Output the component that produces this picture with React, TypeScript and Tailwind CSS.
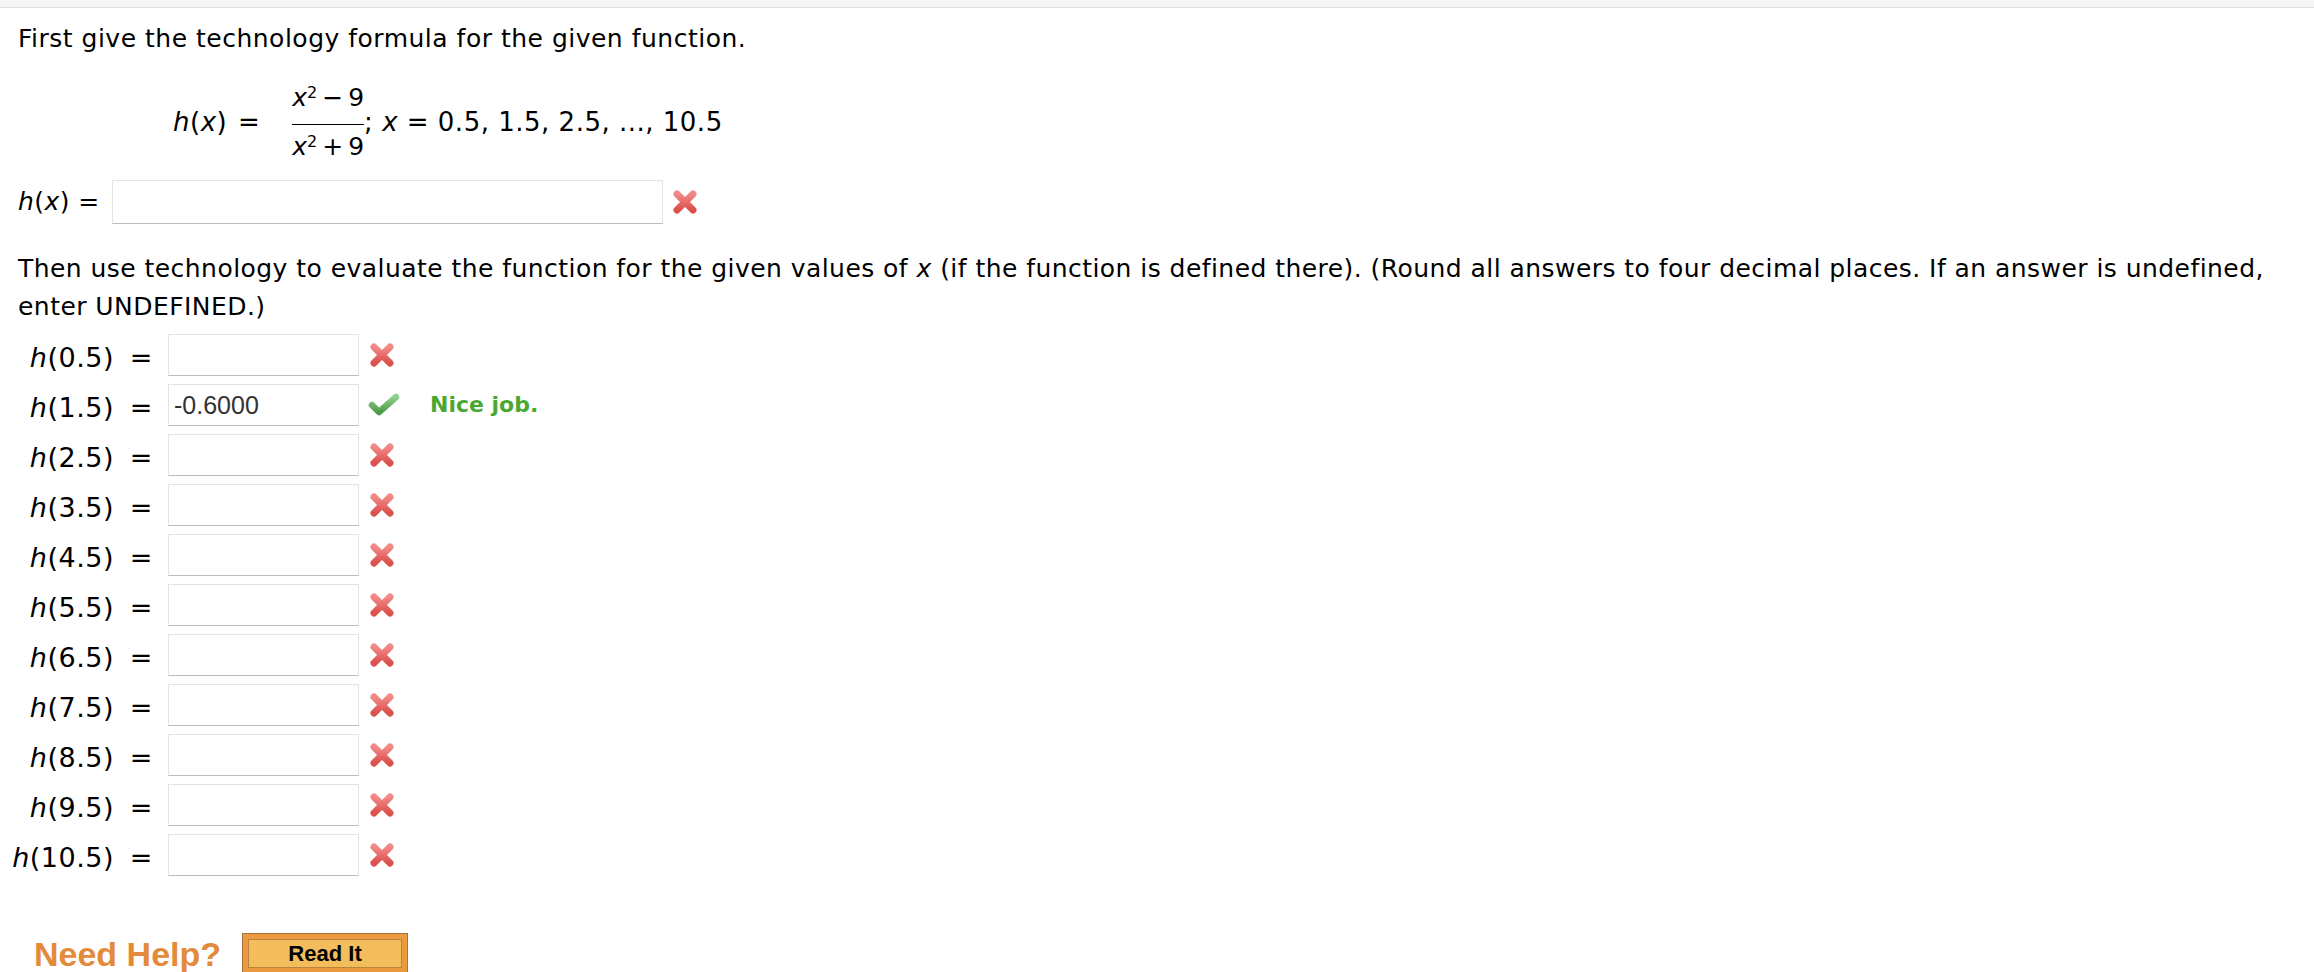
import React from 'react';

const values = ['0.5', '1.5', '2.5', '3.5', '4.5', '5.5', '6.5', '7.5', '8.5', '9.5', '10.5'];

const WrongMark = () => (
  <svg width="28" height="28" viewBox="0 0 28 28" className="shrink-0">
    <defs>
      <linearGradient id="xg" x1="0" y1="0" x2="0" y2="1">
        <stop offset="0" stopColor="#f28a88" />
        <stop offset="1" stopColor="#db4f4d" />
      </linearGradient>
    </defs>
    <path d="M6 6 L22 22 M22 6 L6 22" stroke="url(#xg)" strokeWidth="7" strokeLinecap="round" fill="none" />
  </svg>
);

const RightMark = () => (
  <svg width="32" height="26" viewBox="0 0 32 26" className="shrink-0">
    <defs>
      <linearGradient id="cg" x1="0" y1="0" x2="0" y2="1">
        <stop offset="0" stopColor="#8fd08c" />
        <stop offset="1" stopColor="#4d9c4a" />
      </linearGradient>
    </defs>
    <path d="M4 13 L11 20 L28 5" stroke="url(#cg)" strokeWidth="6.5" strokeLinecap="round" strokeLinejoin="round" fill="none" />
  </svg>
);

const AnswerBox = ({ value, className }: { value?: string; className: string }) => (
  <div
    className={`border border-[#e3e3e3] border-b-[#bdbdbd] bg-white flex items-center pl-[5px] font-['Liberation_Sans',Arial,sans-serif] text-[25px] tracking-normal text-[#333] ${className}`}
  >
    {value}
  </div>
);

// x² with a small raised 2
const XSquared = () => (
  <>
    <i>x</i>
    <sup className="text-[16px] leading-none">2</sup>
  </>
);

export default function App() {
  return (
    <div className="min-h-[972px] bg-white text-black font-['DejaVu_Sans',Verdana,sans-serif]">
      <div className="h-[8px] bg-[#f5f5f5] border-b border-[#e0e0e0]" />
      <div className="px-[18px]">
        <p className="mt-[13px] text-[25px] tracking-[0.5px] leading-[36px]">
          First give the technology formula for the given function.
        </p>

        {/* formula */}
        <div className="mt-[26px] ml-[155px] flex items-center text-[26px] leading-[30px]">
          <span className="whitespace-pre pb-[6px] tracking-[0.5px]">
            <i>h</i>(<i>x</i>) <span className="mx-[2px]">=</span>
          </span>
          <div className="ml-[30px] flex flex-col items-stretch text-[25px]">
            <div className="pb-[11px] text-center leading-[30px] whitespace-nowrap">
              <XSquared />
              <span className="mx-[5px]">−</span>9
            </div>
            <div className="h-px bg-black" />
            <div className="pt-[7px] pb-[4px] text-center leading-[30px] whitespace-nowrap">
              <XSquared />
              <span className="mx-[5px]">+</span>9
            </div>
          </div>
          <span className="pb-[6px] tracking-[0.5px]">
            ; <i>x</i> = 0.5, 1.5, 2.5, ..., 10.5
          </span>
        </div>

        <div className="mt-[14px] flex items-center text-[25px] tracking-[0.45px] leading-[28px]">
          <span className="w-[94px]">
            <i>h</i>(<i>x</i>) =
          </span>
          <AnswerBox className="w-[551px] h-[44px]" />
          <div className="ml-[8px]">
            <WrongMark />
          </div>
        </div>

        <p className="mt-[26px] text-[25px] tracking-[0.45px] leading-[38px]">
          Then use technology to evaluate the function for the given values of <i>x</i> (if the function is defined
          there). (Round all answers to four decimal places. If an answer is undefined, enter UNDEFINED.)
        </p>
      </div>

      <div className="mt-[4px]">
        {values.map((v) => {
          const ok = v === '1.5';
          return (
            <div key={v} className="h-[50px] flex items-center text-[27px] leading-[30px]">
              <span className="w-[114px] text-right pt-[6px] tracking-[0.5px] whitespace-nowrap">
                <i>h</i>({v})
              </span>
              <span className="w-[54px] text-center pt-[6px]">=</span>
              <AnswerBox value={ok ? '-0.6000' : undefined} className="w-[191px] h-[42px]" />
              <div className="ml-[9px] w-[62px]">{ok ? <RightMark /> : <WrongMark />}</div>
              {ok && <span className="text-[22px] font-bold text-[#4aa832]">Nice job.</span>}
            </div>
          );
        })}
      </div>

      <div className="mt-[53px] ml-[34px] flex items-center">
        <span className="font-['Liberation_Sans',Arial,sans-serif] font-bold text-[34px] leading-[40px] text-[#e38b3a]">
          Need Help?
        </span>
        <button className="ml-[21px] w-[166px] h-[41px] border border-[#a8733a] bg-[#eb9a40] p-[5px]">
          <div className="h-full border border-[#b9853e] bg-[#f2bd5a] flex items-center justify-center font-['Liberation_Sans',Arial,sans-serif] font-bold text-[22px] text-black">
            Read It
          </div>
        </button>
      </div>
    </div>
  );
}
